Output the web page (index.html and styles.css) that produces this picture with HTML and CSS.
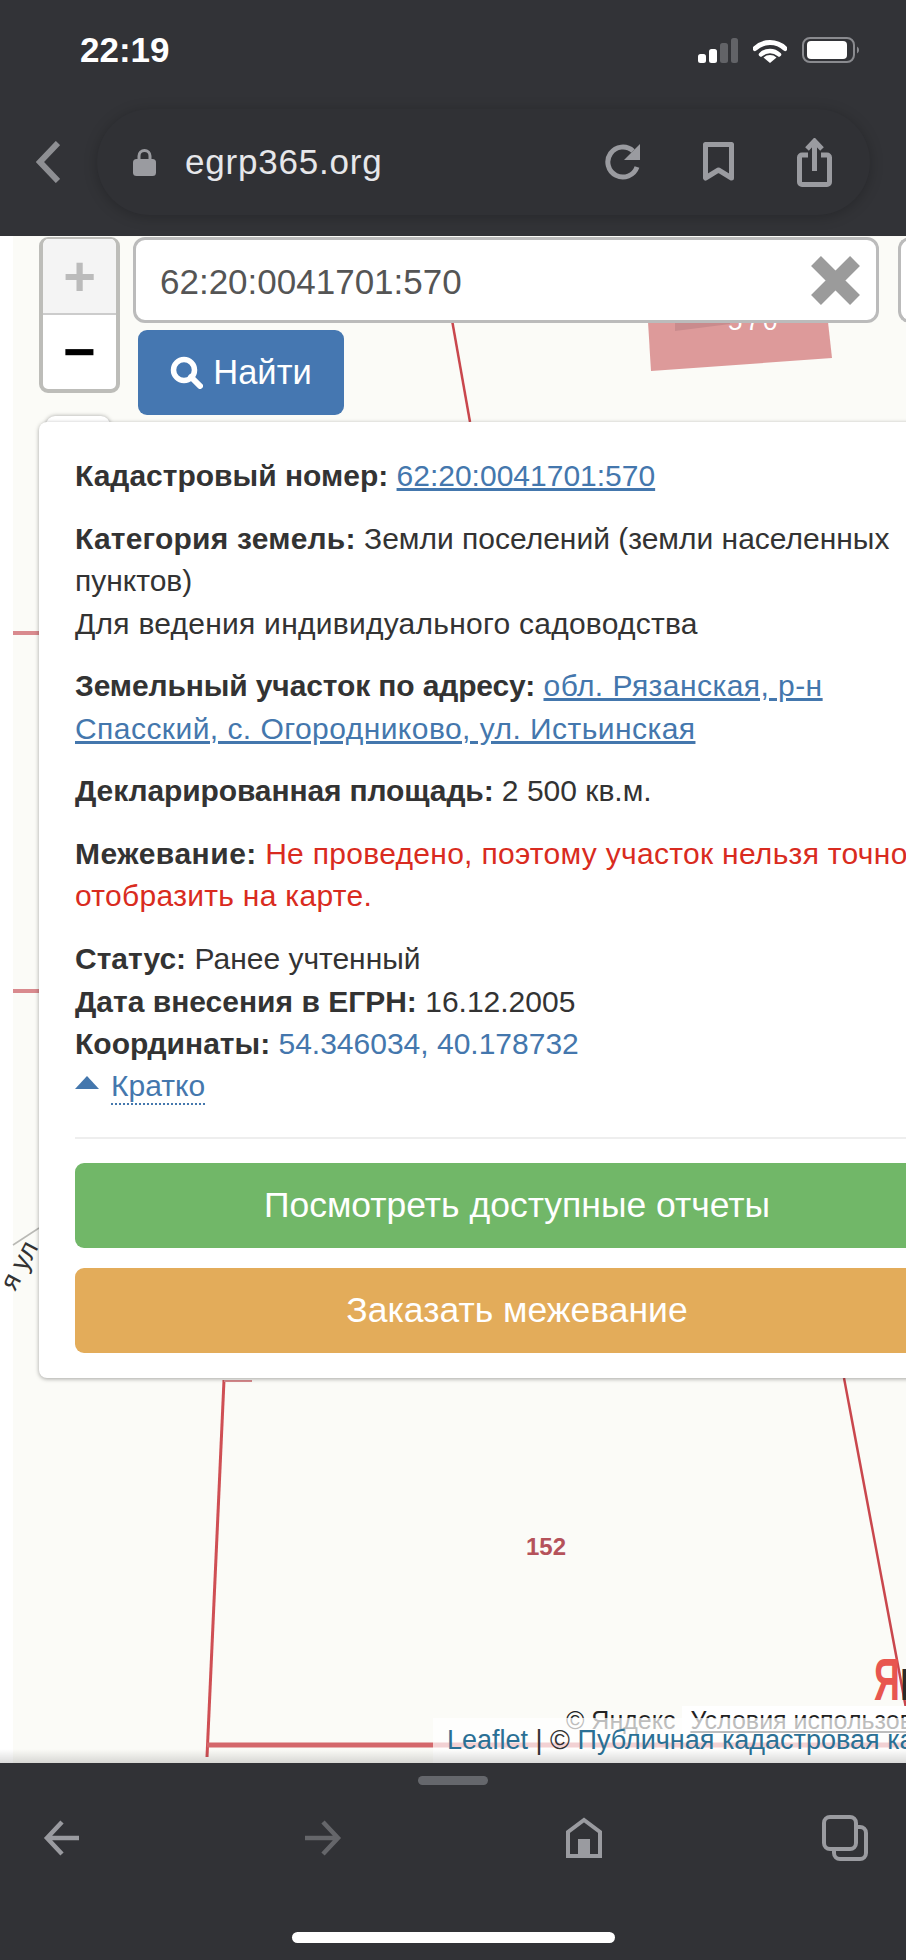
FILE: index.html
```html
<!DOCTYPE html>
<html lang="ru">
<head>
    <meta charset="UTF-8">
    <meta name="viewport" content="width=device-width, initial-scale=1.0">
    <title>egrp365.org</title>
    <link rel="stylesheet" href="styles.css">
</head>
<body>
    <header class="top-bar">
        <div class="status-row">
            <span class="time">22:19</span>
            <div class="status-icons">
                <svg width="40" height="25" viewBox="0 0 40 25">
                    <rect x="0" y="16" width="8" height="9" rx="2.5" fill="#fff"/>
                    <rect x="11" y="11" width="8" height="14" rx="2.5" fill="#fff"/>
                    <rect x="22" y="5" width="8" height="20" rx="2.5" fill="#626367"/>
                    <rect x="33" y="0" width="7" height="25" rx="2.5" fill="#626367"/>
                </svg>
                <svg width="34" height="25" viewBox="0 0 34 25">
                    <path d="M2 10.5A22 22 0 0 1 32 10.5" fill="none" stroke="#fff" stroke-width="5" stroke-linecap="round"/>
                    <path d="M8 16.5A13 13 0 0 1 26 16.5" fill="none" stroke="#fff" stroke-width="4.5" stroke-linecap="round"/>
                    <path d="M17 25L10.5 19.5A10 10 0 0 1 23.5 19.5Z" fill="#fff"/>
                </svg>
                <svg width="58" height="26" viewBox="0 0 58 26">
                    <rect x="1" y="1" width="51" height="24" rx="7" fill="none" stroke="#8a8b8f" stroke-width="2"/>
                    <rect x="5" y="4" width="40" height="18" rx="4" fill="#fff"/>
                    <path d="M55 9.500A4 4 0 0 1 55 16.500Z" fill="#8a8b8f"/>
                </svg>
            </div>
        </div>
        <div class="toolbar">
            <svg class="chevron" width="24" height="42" viewBox="0 0 24 42">
                <path d="M22 2L4 21L22 40" fill="none" stroke="#8e8f93" stroke-width="6"/>
            </svg>
            <div class="address-pill">
                <svg width="23" height="28" viewBox="0 0 23 28">
                    <path d="M6 13V8a5.500 5.500 0 0 1 11 0V13" fill="none" stroke="#9a9ba0" stroke-width="3"/>
                    <rect x="0" y="11" width="23" height="17" rx="3.500" fill="#9a9ba0"/>
                </svg>
                <span class="url">egrp365.org</span>
                <div class="pill-icons">
                    <svg width="36" height="36" viewBox="0 0 36 36">
                        <path d="M29 7A15 15 0 1 0 33 23" fill="none" stroke="#9a9ba0" stroke-width="5"/>
                        <path d="M36 0V16H20Z" fill="#9a9ba0"/>
                    </svg>
                    <svg width="31" height="40" viewBox="0 0 31 40">
                        <path d="M2.500 2.500H28.500V36L15.500 28L2.500 36Z" fill="none" stroke="#9a9ba0" stroke-width="5" stroke-linejoin="round"/>
                    </svg>
                    <svg width="35" height="49" viewBox="0 0 35 49">
                        <path d="M11 17H5a2.500 2.500 0 0 0-2.500 2.500V44a2.500 2.500 0 0 0 2.500 2.500H30a2.500 2.500 0 0 0 2.500-2.500V19.500a2.500 2.500 0 0 0-2.500-2.500H24" fill="none" stroke="#9a9ba0" stroke-width="5"/>
                        <path d="M17.500 3V33" stroke="#9a9ba0" stroke-width="5"/>
                        <path d="M10 11L17.500 3L25 11" fill="none" stroke="#9a9ba0" stroke-width="5"/>
                    </svg>
                </div>
            </div>
        </div>
    </header>

    <main class="map">
        <svg class="map-canvas" width="906" height="1527" viewBox="0 236 906 1527">
            <path d="M648 322H828L832 358L651 371Z" fill="#dd9a9a"/>
            <path d="M675 322H730V324L675 331Z" fill="#c98b8d"/>
            <text x="728" y="330" class="parcel-label-white">570</text>
            <path d="M452 320L470 422" stroke="#c9474d" stroke-width="2.500" fill="none"/>
            <path d="M13 633H39" stroke="#d98a8e" stroke-width="4"/>
            <path d="M13 991H39" stroke="#d98a8e" stroke-width="4"/>
            <path d="M13 1245L39 1228" stroke="#b9b9b5" stroke-width="1.500"/>
            <text class="road-label" transform="translate(15 1292) rotate(-62)">я ул</text>
            <path d="M224 1380L207 1757" stroke="#cf4f54" stroke-width="3" fill="none"/>
            <path d="M224 1381H252" stroke="#d98a8e" stroke-width="2"/>
            <path d="M844 1378L906 1708" stroke="#c9474d" stroke-width="2.500" fill="none"/>
            <path d="M207 1745H906" stroke="#d4676b" stroke-width="5"/>
            <text x="526" y="1555" class="parcel-label">152</text>
            <text class="yandex-logo" transform="translate(874 1700) scale(0.6 1)">Я<tspan fill="#2b2b2b">н</tspan></text>
        </svg>

        <div class="map-controls">
            <div class="zoom-box">
                <span class="zoom-btn zoom-in">+</span>
                <span class="zoom-btn zoom-out">−</span>
            </div>
            <div class="search-col">
                <div class="search-row">
                    <div class="search-input">
                        <span class="search-text">62:20:0041701:570</span>
                        <svg width="49" height="49" viewBox="0 0 49 49">
                            <path d="M5 5L44 44M44 5L5 44" stroke="#9b9b9b" stroke-width="14"/>
                        </svg>
                    </div>
                    <div class="search-next"></div>
                </div>
                <button class="find-btn">
                    <svg width="33" height="33" viewBox="0 0 33 33">
                        <circle cx="14" cy="14" r="10.500" fill="none" stroke="#fff" stroke-width="5.500"/>
                        <path d="M21 21L30 30" stroke="#fff" stroke-width="6" stroke-linecap="round"/>
                    </svg>
                    Найти
                </button>
            </div>
        </div>

        <div class="layer-tab"></div>

        <section class="popup">
            <p><b>Кадастровый номер:</b> <a href="#">62:20:0041701:570</a></p>
            <p><b class="label-category">Категория земель:</b> Земли поселений (земли населенных пунктов)<br><span class="roomy">Для ведения индивидуального садоводства</span></p>
            <p><b class="label-tight">Земельный участок по адресу:</b> <a class="address" href="#">обл. Рязанская, р-н Спасский, с. Огородниково, ул. Истьинская</a></p>
            <p><b class="label-tight">Декларированная площадь:</b> 2 500 кв.м.</p>
            <p><b class="label-survey">Межевание:</b> <span class="warn">Не проведено, поэтому участок нельзя точно отобразить на карте.</span></p>
            <div class="details">
                <div><b>Статус:</b> Ранее учтенный</div>
                <div><b>Дата внесения в ЕГРН:</b> 16.12.2005</div>
                <div><b>Координаты:</b> <span class="coords">54.346034, 40.178732</span></div>
                <div class="toggle"><i class="triangle"></i><span class="toggle-link">Кратко</span></div>
            </div>
            <hr>
            <a class="action green" href="#">Посмотреть доступные отчеты</a>
            <a class="action orange" href="#">Заказать межевание</a>
        </section>

        <div class="copyright">© Яндекс <span class="terms">Условия использования</span></div>
        <div class="attribution"><span class="leaflet">Leaflet</span> | © <span class="leaflet">Публичная кадастровая карта</span></div>
    </main>

    <footer class="bottom-bar">
        <div class="handle"></div>
        <nav class="nav-row">
            <svg width="46" height="46" viewBox="0 0 46 46">
                <path d="M41 23H9M24 7L9 23L24 39" fill="none" stroke="#9a9ba0" stroke-width="4.500"/>
            </svg>
            <svg width="46" height="46" viewBox="0 0 46 46">
                <path d="M6 23H38M24 7L39 23L24 39" fill="none" stroke="#65666a" stroke-width="4.500"/>
            </svg>
            <svg width="46" height="46" viewBox="0 0 46 46">
                <path d="M7 41V17L23 5L39 17V41Z" fill="none" stroke="#9a9ba0" stroke-width="4"/>
                <rect x="17" y="24" width="12" height="17" fill="#9a9ba0"/>
            </svg>
            <svg width="46" height="46" viewBox="0 0 46 46">
                <rect x="12" y="12" width="32" height="32" rx="6" fill="#313236" stroke="#9a9ba0" stroke-width="4"/>
                <rect x="2" y="2" width="32" height="32" rx="6" fill="#313236" stroke="#9a9ba0" stroke-width="4"/>
            </svg>
        </nav>
        <div class="home-indicator"></div>
    </footer>
</body>
</html>
```
FILE: styles.css
```css
body {
    margin: 0;
    width: 906px;
    height: 1960px;
    overflow: hidden;
    display: flex;
    flex-direction: column;
    font-family: "Liberation Sans", Arial, sans-serif;
    font-size: 30px;
    line-height: 42.4px;
    color: #333;
    background: #fff;
}

.top-bar {
    height: 236px;
    flex-shrink: 0;
    background: #323337;
}

.status-row {
    height: 100px;
    padding: 0 46px 0 80px;
    display: flex;
    justify-content: space-between;
    align-items: center;
}

.time {
    color: #fff;
    font-size: 35px;
    font-weight: bold;
}

.status-icons {
    display: flex;
    align-items: center;
    gap: 15px;
    margin-left: auto;
}

.toolbar {
    margin-top: 9px;
    padding-left: 36px;
    display: flex;
    align-items: center;
    gap: 37px;
}

.address-pill {
    width: 773px;
    height: 106px;
    box-sizing: border-box;
    padding: 0 38px 0 36px;
    display: flex;
    align-items: center;
    gap: 29px;
    border-radius: 53px;
    background: #303135;
    box-shadow: 0 2px 14px rgba(0, 0, 0, 0.22);
}

.url {
    color: #e6e7ea;
    font-size: 35px;
    letter-spacing: 0.8px;
}

.pill-icons {
    margin-left: auto;
    display: flex;
    align-items: center;
    gap: 63px;
}

.map {
    position: relative;
    flex: 1;
    overflow: hidden;
    background: linear-gradient(to right, #fff 13px, #fbfbf7 13px);
}

.map::after {
    content: "";
    position: absolute;
    left: 0;
    right: 0;
    bottom: 0;
    height: 14px;
    background: linear-gradient(to bottom, rgba(0, 0, 0, 0), rgba(0, 0, 0, 0.14));
}

.map-canvas {
    position: absolute;
    left: 0;
    top: 0;
}

.parcel-label {
    font-size: 24px;
    font-weight: bold;
    fill: #b5525a;
}

.parcel-label-white {
    font-size: 26px;
    fill: #fff;
    letter-spacing: 3px;
}

.road-label {
    font-size: 27px;
    fill: #333;
}

.yandex-logo {
    font-size: 60px;
    font-weight: bold;
    fill: #e8564f;
}

.map-controls {
    position: absolute;
    left: 39px;
    top: 1px;
    display: flex;
    gap: 13px;
}

.zoom-box {
    width: 81px;
    height: 156px;
    box-sizing: border-box;
    display: flex;
    flex-direction: column;
    border: 4px solid #bdbdb9;
    border-top-width: 2px;
    border-radius: 9px;
    background: #fff;
    overflow: hidden;
}

.zoom-btn {
    flex: 1;
    display: flex;
    align-items: center;
    justify-content: center;
    font-size: 56px;
    font-weight: bold;
    line-height: 1;
}

.zoom-in {
    color: #bbb;
    background: #f4f4f4;
    border-bottom: 2px solid #ccc;
}

.zoom-out {
    color: #000;
}

.search-col {
    width: 860px;
}

.search-row {
    display: flex;
    gap: 19px;
}

.search-input {
    width: 746px;
    height: 86px;
    box-sizing: border-box;
    padding: 0 16px 0 24px;
    display: flex;
    align-items: center;
    justify-content: space-between;
    border: 3px solid #bbb;
    border-radius: 12px;
    background: #fff;
    color: #555;
}

.search-text {
    padding-top: 4px;
    font-size: 35px;
}

.search-next {
    width: 60px;
    height: 86px;
    box-sizing: border-box;
    border: 3px solid #bbb;
    border-right: none;
    border-radius: 12px 0 0 12px;
    background: #fff;
}

.find-btn {
    margin: 7px 0 0 5px;
    width: 206px;
    height: 85px;
    padding: 0;
    display: flex;
    align-items: center;
    justify-content: center;
    gap: 10px;
    border: none;
    border-radius: 9px;
    background: #4577b1;
    color: #fff;
    font-family: inherit;
    font-size: 34.500px;
}

.layer-tab {
    position: absolute;
    left: 46px;
    top: 180px;
    width: 64px;
    height: 20px;
    border-radius: 9px 9px 0 0;
    background: #fff;
    box-shadow: 0 0 4px rgba(0, 0, 0, 0.35);
}

.popup {
    position: absolute;
    left: 39px;
    top: 186px;
    width: 884px;
    padding: 33px 36px 25px;
    background: #fff;
    border-radius: 8px;
    box-shadow: 0 1px 4px rgba(0, 0, 0, 0.35);
}

.popup p {
    margin: 0 0 20.300px;
}

.popup a {
    color: #4477ad;
}

.label-category {
    letter-spacing: 0.22px;
}

.label-survey {
    letter-spacing: 0.5px;
}

.label-tight {
    letter-spacing: -0.12px;
}

.roomy {
    letter-spacing: 0.25px;
}

.popup .address {
    letter-spacing: 0.45px;
}

.warn {
    color: #d92b20;
    letter-spacing: 0.3px;
}

.coords {
    color: #4477ad;
}

.toggle {
    height: 42.400px;
    display: flex;
    align-items: center;
    gap: 12px;
}

.triangle {
    width: 0;
    height: 0;
    margin-top: -8px;
    border-left: 12.500px solid transparent;
    border-right: 12.500px solid transparent;
    border-bottom: 13px solid #4477ad;
}

.toggle-link {
    color: #4477ad;
    border-bottom: 2px dotted #4477ad;
    line-height: 35px;
}

.popup hr {
    margin: 29px 0 24px;
    border: none;
    border-top: 2px solid #eee;
}

.popup .action {
    display: block;
    height: 85px;
    line-height: 85px;
    text-align: center;
    border-radius: 9px;
    color: #fff;
    font-size: 35.500px;
    text-decoration: none;
}

.popup .action + .action {
    margin-top: 20px;
}

.green {
    background: #71b768;
}

.orange {
    background: #e3ac5a;
}

.copyright {
    position: absolute;
    left: 566px;
    top: 1464px;
    font-size: 25px;
    line-height: 40px;
    color: #222;
    white-space: nowrap;
}

.terms {
    padding-left: 8px;
    background: #fff;
    text-decoration: underline;
}

.attribution {
    position: absolute;
    left: 433px;
    right: 0;
    bottom: 0;
    height: 45px;
    padding-left: 14px;
    background: rgba(255, 255, 255, 0.7);
    font-size: 27px;
    line-height: 44px;
    color: #333;
    white-space: nowrap;
    overflow: hidden;
}

.leaflet {
    color: #2b7095;
}

.bottom-bar {
    height: 197px;
    flex-shrink: 0;
    box-sizing: border-box;
    padding-top: 13px;
    background: #313236;
}

.handle {
    width: 70px;
    height: 9px;
    margin: 0 auto;
    border-radius: 5px;
    background: #65676c;
}

.nav-row {
    margin-top: 30px;
    padding: 0 38px;
    display: flex;
    justify-content: space-between;
}

.home-indicator {
    width: 323px;
    height: 11px;
    margin: 71px auto 0 292px;
    border-radius: 6px;
    background: #fff;
}
```
